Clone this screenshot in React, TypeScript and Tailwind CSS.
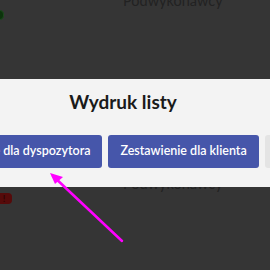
import React from 'react';

export default function App() {
  return (
    <div className="relative h-[270px] w-[270px] overflow-hidden bg-[#353535] font-['Lato','Noto_Sans',sans-serif]">
      {/* page behind the dialog */}
      <div className="flex flex-col">
        <div className="-mt-[7px] pl-[123px] text-[14.5px] leading-4 text-[#222]">Podwykonawcy</div>
        <div className="-ml-[6px] mt-[1px] h-[10px] w-[10px] rounded-sm border border-[#1d4a1d] bg-[#0c330c]" />
        <div className="mt-[156px] pl-[123px] text-[14.5px] leading-4 text-[#222]">Podwykonawcy</div>
        <div className="-ml-[4px] mt-[1px] flex h-[11px] w-[16px] items-center justify-center rounded-sm bg-[#560a0a] text-[9px] font-bold leading-none text-[#2a0505]">
          !
        </div>
      </div>

      {/* dialog */}
      <div className="absolute left-[-200px] top-[79px] flex h-[108px] w-[646px] flex-col items-center bg-[#f3f3f3] pt-[11px]">
        <h2 className="text-[19px] font-bold leading-6 text-[#1a1a1a]">Wydruk listy</h2>
        <div className="mt-[21px] flex gap-[6px]">
          <button className="h-[33px] rounded-[3px] bg-[#4656aa] px-[12px] text-[12.5px] font-semibold text-white">
            Zestawienie dla dyspozytora
          </button>
          <button className="h-[33px] rounded-[3px] bg-[#4656aa] px-[12px] text-[12.5px] font-semibold text-white">
            Zestawienie dla klienta
          </button>
          <button className="h-[33px] rounded-[3px] bg-[#e4e4e4] px-[12px] text-[12.5px] font-semibold text-[#333]">
            Anuluj
          </button>
        </div>
      </div>

      {/* annotation arrow */}
      <svg className="absolute inset-0" width="270" height="270" viewBox="0 0 270 270">
        <line x1="122" y1="241" x2="53" y2="176" stroke="#ff00ff" strokeWidth="2.5" strokeLinecap="round" />
        <path d="M50 173 L63 177 L55 184 Z" fill="#ff00ff" />
      </svg>
    </div>
  );
}
